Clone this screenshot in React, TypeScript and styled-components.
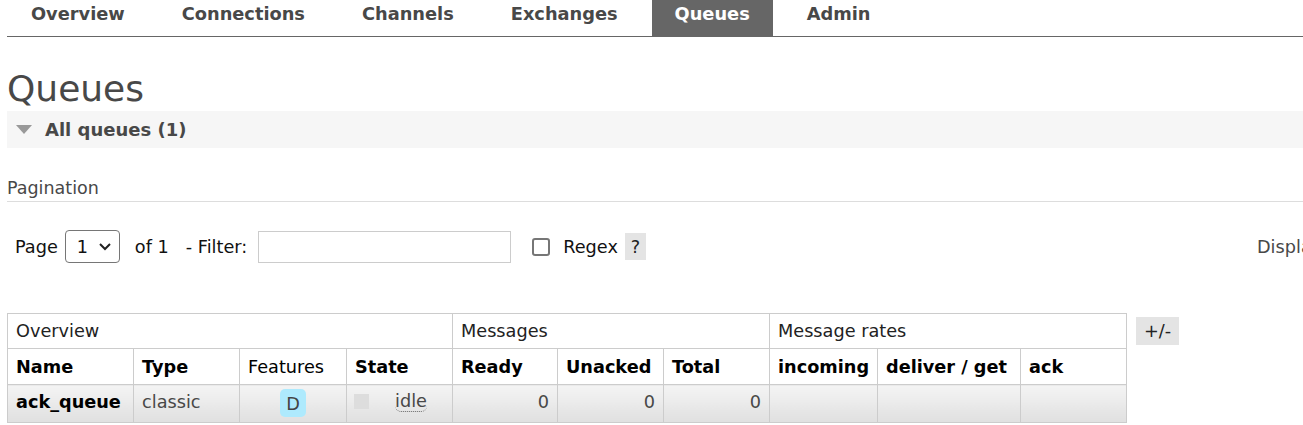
import React from "react";
import styled, { createGlobalStyle } from "styled-components";

const Global = createGlobalStyle`
  body {
    margin: 0;
    font-family: "DejaVu Sans", Verdana, sans-serif;
    color: #484848;
    background: #fff;
  }
`;

const tabs = ["Overview", "Connections", "Channels", "Exchanges", "Queues", "Admin"];

const App = () => {
    return (
        <>
            <Global/>
            <Page>
                <Menu>
                    {tabs.map((t) => (
                        <Tab key={t} active={t === "Queues"}>{t}</Tab>
                    ))}
                </Menu>

                <Title>Queues</Title>
                <Section>
                    <Arrow/>
                    All queues (1)
                </Section>

                <SubTitle>Pagination</SubTitle>
                <Controls>
                    <Label gap={7}>Page</Label>
                    <Select>
                        <span>1</span>
                        <svg width="14" height="9" viewBox="0 0 14 9">
                            <path d="M2 2 L7 7 L12 2" fill="none" stroke="#222" strokeWidth="2"/>
                        </svg>
                    </Select>
                    <Label gap={17}>of 1</Label>
                    <Label gap={11}>- Filter:</Label>
                    <Input/>
                    <Check/>
                    <Label gap={7}>Regex</Label>
                    <Help>?</Help>
                    <Display>Displa</Display>
                </Controls>

                <TableRow>
                    <Table>
                        <thead>
                        <tr>
                            <Group colSpan={4}>Overview</Group>
                            <Group colSpan={3}>Messages</Group>
                            <Group colSpan={3}>Message rates</Group>
                        </tr>
                        <tr>
                            <Head w={126}>Name</Head>
                            <Head w={106}>Type</Head>
                            <Head w={107} plain>Features</Head>
                            <Head w={106}>State</Head>
                            <Head w={105}>Ready</Head>
                            <Head w={106}>Unacked</Head>
                            <Head w={106}>Total</Head>
                            <Head w={108}>incoming</Head>
                            <Head w={143}>deliver / get</Head>
                            <Head w={106}>ack</Head>
                        </tr>
                        </thead>
                        <tbody>
                        <tr>
                            <Cell bold>ack_queue</Cell>
                            <Cell>classic</Cell>
                            <Cell center><Badge>D</Badge></Cell>
                            <Cell>
                                <StateBox>
                                    <Square/>
                                    <Abbr>idle</Abbr>
                                </StateBox>
                            </Cell>
                            <Cell right>0</Cell>
                            <Cell right>0</Cell>
                            <Cell right>0</Cell>
                            <Cell/>
                            <Cell/>
                            <Cell/>
                        </tr>
                        </tbody>
                    </Table>
                    <Toggle>+/-</Toggle>
                </TableRow>
            </Page>
        </>
    )
};
export default App;

const Page = styled.div`
    width: 1303px;
    height: 425px;
    overflow: hidden;
    padding: 0 0 0 7px;
    box-sizing: border-box;
`;
const Menu = styled.div`
    display: flex;
    gap: 11px;
    height: 36px;
    border-bottom: 1px solid #666;
    padding-left: 1px;
`;
const Tab = styled.div<{active?: boolean}>`
    padding: 0 23px;
    height: 36px;
    line-height: 28px;
    font-size: 17.8px;
    font-weight: bold;
    color: ${(p) => p.active ? "#fff" : "#484848"};
    background: ${(p) => p.active ? "#666" : "transparent"};
`;
const Title = styled.h1`
    margin: 29px 0 0 0;
    font-size: 36px;
    font-weight: normal;
    line-height: 45px;
    color: #484848;
`;
const Section = styled.div`
    display: flex;
    align-items: center;
    gap: 13px;
    height: 37px;
    padding-left: 9px;
    background: #f6f6f6;
    font-size: 18px;
    font-weight: bold;
    color: #484848;
`;
const Arrow = styled.span`
    width: 0;
    height: 0;
    border-left: 8px solid transparent;
    border-right: 8px solid transparent;
    border-top: 9px solid #999;
`;
const SubTitle = styled.div`
    margin-top: 29px;
    font-size: 17.5px;
    line-height: 22px;
    padding-bottom: 2px;
    border-bottom: 1px solid #ddd;
    color: #484848;
`;
const Controls = styled.div`
    display: flex;
    align-items: center;
    height: 33px;
    margin-top: 28px;
    padding-left: 8px;
    font-size: 17.7px;
    color: #111;
    position: relative;
`;
const Label = styled.span<{gap: number}>`
    margin-right: ${(p) => p.gap}px;
`;
const Select = styled.div`
    display: flex;
    align-items: center;
    justify-content: space-between;
    box-sizing: border-box;
    width: 55px;
    height: 33px;
    padding: 0 7px 0 11px;
    border: 1px solid #767676;
    border-radius: 4px;
    color: #111;
    margin-right: 15px;
`;
const Input = styled.div`
    box-sizing: border-box;
    width: 253px;
    height: 32px;
    border: 1px solid #ccc;
    margin-right: 21px;
`;
const Check = styled.div`
    box-sizing: border-box;
    width: 18px;
    height: 18px;
    border: 2px solid #767676;
    border-radius: 3px;
    margin-right: 13px;
`;
const Help = styled.span`
    display: flex;
    align-items: center;
    justify-content: center;
    width: 21px;
    height: 27px;
    background: #e4e4e4;
    color: #222;
`;
const Display = styled.span`
    position: absolute;
    left: 1250px;
    color: #484848;
`;
const TableRow = styled.div`
    display: flex;
    align-items: flex-start;
    gap: 9px;
    margin-top: 50px;
`;
const Table = styled.table`
    border-collapse: collapse;
    font-size: 17.7px;
    table-layout: fixed;
`;
const Group = styled.th`
    height: 35px;
    padding: 0 8px;
    text-align: left;
    font-weight: normal;
    color: #222;
    border: 1px solid #ccc;
    box-sizing: border-box;
`;
const Head = styled.th<{w: number; plain?: boolean}>`
    width: ${(p) => p.w}px;
    height: 36px;
    padding: 0 8px;
    text-align: left;
    font-weight: ${(p) => p.plain ? "normal" : "bold"};
    color: #000;
    border: 1px solid #ccc;
    box-sizing: border-box;
    white-space: nowrap;
    overflow: hidden;
`;
const Cell = styled.td<{bold?: boolean; center?: boolean; right?: boolean}>`
    height: 33px;
    padding: 0 8px 4px;
    border: 1px solid #ccc;
    background: linear-gradient(#f4f4f4, #e0e0e0);
    font-weight: ${(p) => p.bold ? "bold" : "normal"};
    color: ${(p) => p.bold ? "#000" : "#484848"};
    text-align: ${(p) => p.center ? "center" : p.right ? "right" : "left"};
    white-space: nowrap;
`;
const Badge = styled.span`
    display: inline-block;
    vertical-align: middle;
    width: 26px;
    height: 28px;
    line-height: 30px;
    margin-top: 3px;
    text-align: center;
    border-radius: 5px;
    background: #aeeafd;
    color: #444;
`;
const StateBox = styled.div`
    display: flex;
    align-items: center;
    gap: 26px;
    margin-left: -1px;
`;
const Square = styled.span`
    width: 15px;
    height: 15px;
    background: #ddd;
`;
const Abbr = styled.span`
    border-bottom: 1px dotted #666;
    border-radius: 0 0 6px 6px;
    line-height: 19px;
`;
const Toggle = styled.div`
    margin-top: 4px;
    padding: 0 8px;
    height: 28px;
    line-height: 28px;
    background: #e4e4e4;
    font-size: 17.7px;
    color: #222;
`;
